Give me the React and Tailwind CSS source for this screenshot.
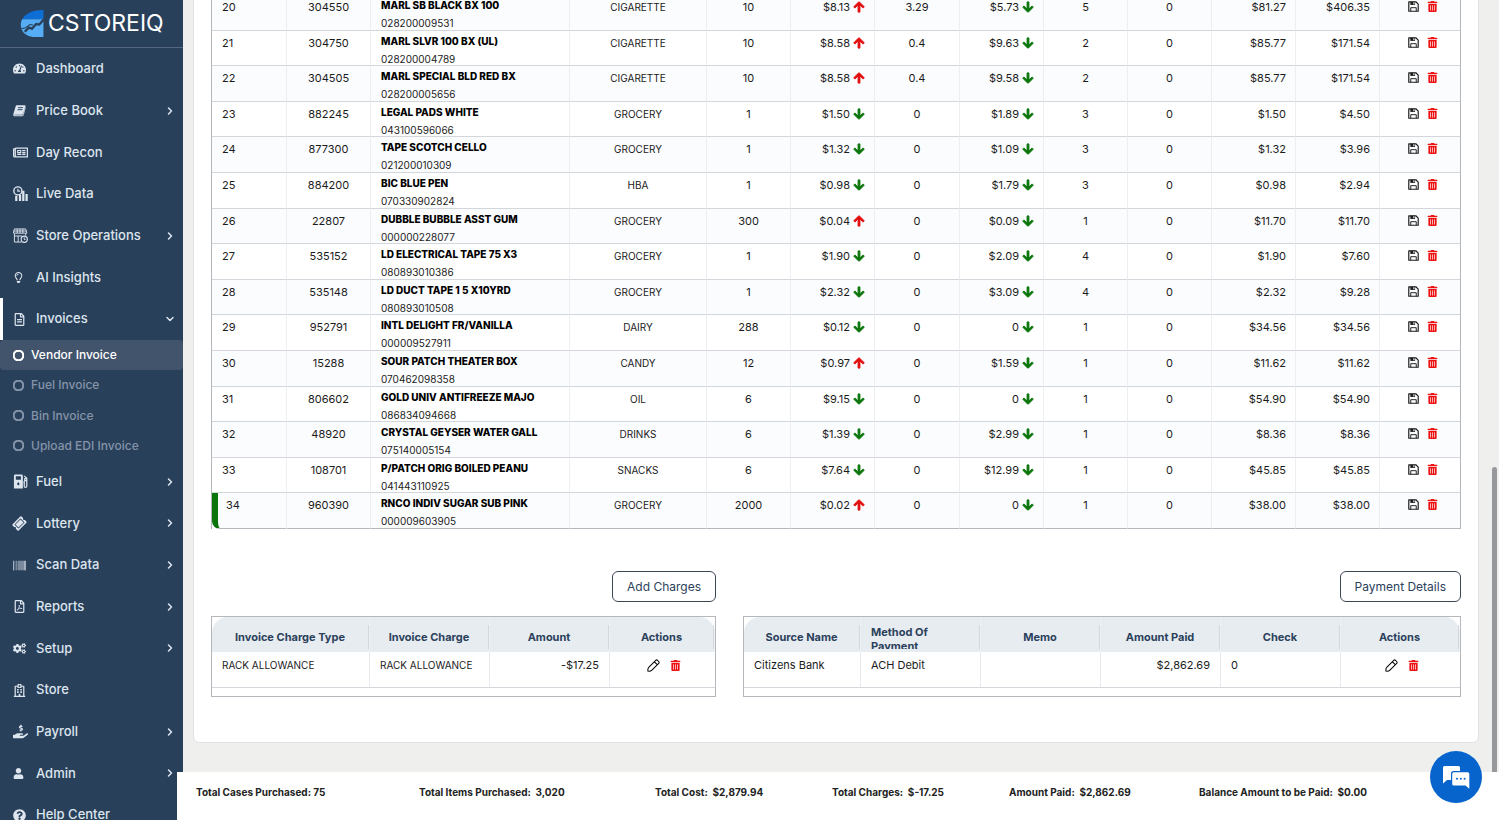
import { ChevronDown, ChevronRight } from 'lucide-react';
import {
  FaArrowDown, FaArrowUp, FaBarcode, FaCogs, FaHandHoldingUsd, FaQuestionCircle, FaRegCircle, FaRegFileAlt,
  FaRegFilePdf, FaRegHospital, FaRegLightbulb, FaRegNewspaper, FaTachometerAlt, FaTicketAlt, FaTrashAlt, FaUser,
} from 'react-icons/fa';

function BookIcon(props) {
  return (
    <svg viewBox="0 0 16 16" fill="currentColor" {...props}>
      <path d="M5 1.500h9.200c.9 0 1.400.7 1.100 1.500l-2.600 8.800c-.3 1-.9 1.300-1.800 1.300H2.200c-.5 0-.5.7.2.7h9.200c.5 0 .8-.2.9-.6L15.300 4l.5.3-2.600 9.300c-.2.8-1 1.400-1.800 1.400H2.200C1 15 0 14 .3 12.800L3.200 3C3.500 2 4 1.500 5 1.500z" />
      <path d="M6.300 4.500h6M5.600 7h6" stroke="#29405b" strokeWidth="1.200" />
    </svg>
  );
}

function LiveDataIcon(props) {
  return (
    <svg viewBox="0 0 16 16" fill="none" stroke="currentColor" {...props}>
      <circle cx="5.200" cy="5.200" r="4.300" strokeWidth="1.500" />
      <path d="M5.200 2.800v2.600h2.400" strokeWidth="1.200" />
      <path d="M3.500 10.500V16M7.500 9.500V16M11 5v11M14.500 8.500V16" strokeWidth="2.400" />
    </svg>
  );
}

function StoreOpsIcon(props) {
  return (
    <svg viewBox="0 0 16 16" fill="none" stroke="currentColor" {...props}>
      <path d="M1.500 1h12l1.300 4.500H.5zM.5 3.200h14M4.500 1v4.500M7.500 1v4.500M10.500 1v4.500M1.500 6v9h7.500M1.500 8.500h8M5.500 8.500V15M13.500 6v2" strokeWidth="1" />
      <circle cx="12" cy="12" r="3.300" strokeWidth="1.200" />
      <path d="M12 10v2.200h1.500" />
    </svg>
  );
}

function PumpIcon(props) {
  return (
    <svg viewBox="0 0 16 16" {...props}>
      <path fill="currentColor" fillRule="evenodd" d="M2.500.5H9A1.500 1.500 0 0 1 10.500 2v13.500H1V2A1.500 1.500 0 0 1 2.500.5zM3 2.500V6h5.500V2.500zM5.700 8.600c-1 1.300-1.200 1.600-1.200 2.200a1.200 1.200 0 0 0 2.400 0c0-.6-.2-.9-1.200-2.200z" />
      <path fill="none" stroke="currentColor" strokeWidth="1.300" d="M11 8.500h1V13c0 1.600 2.700 1.600 2.700 0V4.500L12 2M14.500 5h-2v2h2" />
    </svg>
  );
}

function FloppyIcon(props) {
  return (
    <svg viewBox="0 0 14 14" fill="none" stroke="currentColor" {...props}>
      <path d="M1 1h9l3 3v9H1z" strokeWidth="1.500" strokeLinejoin="round" />
      <path d="M3.500 13V8.500h7V13" strokeWidth="1.200" />
      <path d="M3 1h6v4H3z" fill="currentColor" stroke="none" />
      <path d="M7.500 1.500v2.500" stroke="white" strokeWidth="1.400" />
    </svg>
  );
}

function PencilIcon(props) {
  return (
    <svg viewBox="0 0 14 14" fill="none" stroke="currentColor" strokeWidth="1.100" strokeLinejoin="round" {...props}>
      <path d="M9.400 1.400c.6-.6 1.300-.6 1.900 0l1.300 1.300c.6.6.6 1.300 0 1.900L5.300 11.900c-1 1-3.200 1.300-4.300 1.100-.2-1.100.1-3.300 1.100-4.300zM8 3l3 3" />
    </svg>
  );
}

function ChatIcon(props) {
  return (
    <svg viewBox="0 0 28 24" {...props}>
      <path fill="white" d="M2.500 1h14A1.500 1.500 0 0 1 18 2.500V6h-6.500A2.500 2.500 0 0 0 9 8.500V15H5l-4 3.500v-16A1.500 1.500 0 0 1 2.500 1z" />
      <path fill="white" d="M11.700 7.200h14.100a1.500 1.500 0 0 1 1.500 1.500v15L23.500 20.500H11.700a1.500 1.500 0 0 1-1.500-1.500V8.700a1.500 1.500 0 0 1 1.500-1.500z" />
      <g fill="#0664cc">
        <circle cx="15" cy="13.800" r="1" />
        <circle cx="18.800" cy="13.800" r="1" />
        <circle cx="22.600" cy="13.800" r="1" />
      </g>
    </svg>
  );
}

function LogoMark(props) {
  return (
    <svg viewBox="0 0 22 26" {...props}>
      <path fill="#0d6fd6" d="M22 0v9H1.500C5 3 12 0 22 0z" />
      <path fill="#56adf3" d="M1.500 9H22v17h-8c-6 0-11-2.500-13-7.500C-.3 15 0 12 1.500 9z" />
      <path fill="none" stroke="#29405b" strokeWidth="2.200" d="M4 21l4-4 3 1 4-4.500 3 .5 4.500-5" />
      <path fill="none" stroke="#29405b" strokeWidth="1" d="M1 18l4-1 4-3 3 .5" />
    </svg>
  );
}

const topItems = [
  { label: 'Dashboard', icon: FaTachometerAlt },
  { label: 'Price Book', icon: BookIcon, more: true },
  { label: 'Day Recon', icon: FaRegNewspaper, large: true },
  { label: 'Live Data', icon: LiveDataIcon, large: true },
  { label: 'Store Operations', icon: StoreOpsIcon, more: true, large: true },
  { label: 'AI Insights', icon: FaRegLightbulb, small: true },
  { label: 'Invoices', icon: FaRegFileAlt, open: true },
];

const invoiceItems = ['Vendor Invoice', 'Fuel Invoice', 'Bin Invoice', 'Upload EDI Invoice'];

const bottomItems = [
  { label: 'Fuel', icon: PumpIcon, more: true, large: true },
  { label: 'Lottery', icon: FaTicketAlt, more: true, tilt: true },
  { label: 'Scan Data', icon: FaBarcode, more: true },
  { label: 'Reports', icon: FaRegFilePdf, more: true },
  { label: 'Setup', icon: FaCogs, more: true },
  { label: 'Store', icon: FaRegHospital },
  { label: 'Payroll', icon: FaHandHoldingUsd, more: true, large: true },
  { label: 'Admin', icon: FaUser, more: true, small: true },
  { label: 'Help Center', icon: FaQuestionCircle },
];

// no, item, name, upc, category, units, cost, cost dir, discount, retail, qty, unit total, total
const rows = [
  [20, '304550', 'MARL SB BLACK BX 100', '028200009531', 'CIGARETTE', '10', '$8.13', 'up', '3.29', '$5.73', '5', '$81.27', '$406.35'],
  [21, '304750', 'MARL SLVR 100 BX (UL)', '028200004789', 'CIGARETTE', '10', '$8.58', 'up', '0.4', '$9.63', '2', '$85.77', '$171.54'],
  [22, '304505', 'MARL SPECIAL BLD RED BX', '028200005656', 'CIGARETTE', '10', '$8.58', 'up', '0.4', '$9.58', '2', '$85.77', '$171.54'],
  [23, '882245', 'LEGAL PADS WHITE', '043100596066', 'GROCERY', '1', '$1.50', 'down', '0', '$1.89', '3', '$1.50', '$4.50'],
  [24, '877300', 'TAPE SCOTCH CELLO', '021200010309', 'GROCERY', '1', '$1.32', 'down', '0', '$1.09', '3', '$1.32', '$3.96'],
  [25, '884200', 'BIC BLUE PEN', '070330902824', 'HBA', '1', '$0.98', 'down', '0', '$1.79', '3', '$0.98', '$2.94'],
  [26, '22807', 'DUBBLE BUBBLE ASST GUM', '000000228077', 'GROCERY', '300', '$0.04', 'up', '0', '$0.09', '1', '$11.70', '$11.70'],
  [27, '535152', 'LD ELECTRICAL TAPE 75 X3', '080893010386', 'GROCERY', '1', '$1.90', 'down', '0', '$2.09', '4', '$1.90', '$7.60'],
  [28, '535148', 'LD DUCT TAPE 1 5 X10YRD', '080893010508', 'GROCERY', '1', '$2.32', 'down', '0', '$3.09', '4', '$2.32', '$9.28'],
  [29, '952791', 'INTL DELIGHT FR/VANILLA', '000009527911', 'DAIRY', '288', '$0.12', 'down', '0', '0', '1', '$34.56', '$34.56'],
  [30, '15288', 'SOUR PATCH THEATER BOX', '070462098358', 'CANDY', '12', '$0.97', 'up', '0', '$1.59', '1', '$11.62', '$11.62'],
  [31, '806602', 'GOLD UNIV ANTIFREEZE MAJO', '086834094668', 'OIL', '6', '$9.15', 'down', '0', '0', '1', '$54.90', '$54.90'],
  [32, '48920', 'CRYSTAL GEYSER WATER GALL', '075140005154', 'DRINKS', '6', '$1.39', 'down', '0', '$2.99', '1', '$8.36', '$8.36'],
  [33, '108701', 'P/PATCH ORIG BOILED PEANU', '041443110925', 'SNACKS', '6', '$7.64', 'down', '0', '$12.99', '1', '$45.85', '$45.85'],
  [34, '960390', 'RNCO INDIV SUGAR SUB PINK', '000009603905', 'GROCERY', '2000', '$0.02', 'up', '0', '0', '1', '$38.00', '$38.00'],
];

const totals = [
  'Total Cases Purchased: 75',
  'Total Items Purchased:\u00a0 3,020',
  'Total Cost:\u00a0 $2,879.94',
  'Total Charges:\u00a0 $-17.25',
  'Amount Paid:\u00a0 $2,862.69',
  'Balance Amount to be Paid:\u00a0 $0.00',
];

function NavItem({ item }) {
  const Icon = item.icon;
  let size = 'size-[13px]';
  if (item.large) size = 'size-[15px]';
  if (item.small) size = 'size-[11px]';
  return (
    <a
      href="#"
      className={`flex items-center pr-[7px] pl-[10px] text-[13px] font-medium text-[#dde5ee] border-l-3 ${item.open ? 'border-white' : 'border-transparent'}`}
    >
      <span className="w-[23px] shrink-0">
        <Icon className={`${size} ${item.tilt ? '-rotate-45' : ''}`} />
      </span>
      <span className="flex-1 whitespace-nowrap">{item.label}</span>
      {item.more && <ChevronRight className="size-3" strokeWidth={3} />}
      {item.open && <ChevronDown className="size-3" strokeWidth={3} />}
    </a>
  );
}

function Sidebar() {
  return (
    <aside className="flex w-[183px] shrink-0 flex-col overflow-hidden bg-[#29405b]">
      <div className="flex h-12 shrink-0 items-center gap-1 border-b border-[#54677e] pl-5">
        <LogoMark className="h-[27px] w-6" />
        <span className="text-[23px] leading-none text-white">CSTOREIQ</span>
      </div>
      <nav className="flex flex-col">
        <div className="grid h-[292px] auto-rows-fr">
          {topItems.map((item) => <NavItem key={item.label} item={item} />)}
        </div>
        <div className="grid h-[121px] auto-rows-fr">
          {invoiceItems.map((label, i) => (
            <a
              key={label}
              href="#"
              className={`flex items-center gap-[7px] rounded-sm pl-[13px] text-xs font-medium ${i === 0 ? 'bg-[#42536c] text-white' : 'text-[#8494a8]'}`}
            >
              <FaRegCircle className="size-[11px]" stroke="currentColor" strokeWidth={50} />
              {label}
            </a>
          ))}
        </div>
        <div className="grid h-[375px] auto-rows-fr">
          {bottomItems.map((item) => <NavItem key={item.label} item={item} />)}
        </div>
      </nav>
    </aside>
  );
}

function Trend({ value, dir }) {
  return (
    <span className="flex items-center justify-end gap-[3px]">
      {value}
      {dir === 'up' ? (
        <FaArrowUp className="size-3 text-[#e30d0d]" stroke="currentColor" strokeWidth={40} />
      ) : (
        <FaArrowDown className="size-3 text-[#0b750b]" stroke="currentColor" strokeWidth={40} />
      )}
    </span>
  );
}

function InvoiceTable() {
  const cell = 'border-r border-b border-r-[#eceef1] border-b-[#d3d6da] pt-[3px] align-top group-last:border-b-[#b4b8bc]';
  return (
    <div className="border-x border-[#b4b8bc]">
      <table className="h-[534px] w-full table-fixed border-separate border-spacing-0 text-[11px] leading-[18px] text-[#1b1b1b]">
        <colgroup>
          <col className="w-[75px]" />
          <col className="w-[84px]" />
          <col className="w-[199px]" />
          <col className="w-[137px]" />
          <col className="w-[84px]" />
          <col className="w-[84px]" />
          <col className="w-[85px]" />
          <col className="w-[84px]" />
          <col className="w-[84px]" />
          <col className="w-[84px]" />
          <col className="w-[84px]" />
          <col className="w-[84px]" />
          <col />
        </colgroup>
        <tbody>
          {rows.map(([no, code, name, upc, category, units, cost, dir, discount, retail, qty, unitTotal, total]) => (
            <tr key={no} className="group even:bg-white odd:bg-[#fbfcfe]">
              <td className={`${cell} ${no === 34 ? 'rounded-bl-lg border-l-6 border-l-[#0b750b] pl-2' : 'pl-[10px]'}`}>{no}</td>
              <td className={`${cell} text-center`}>{code}</td>
              <td className={`${cell} pl-[10px]`}>
                <div className="-mt-[3px] h-8 text-[10px] whitespace-nowrap">
                  <div className="pt-[1px] font-extrabold text-black">{name}</div>
                  <div>{upc}</div>
                </div>
              </td>
              <td className={`${cell} text-center text-[10px]`}>{category}</td>
              <td className={`${cell} text-center`}>{units}</td>
              <td className={`${cell} pr-[9px]`}><Trend value={cost} dir={dir} /></td>
              <td className={`${cell} text-center`}>{discount}</td>
              <td className={`${cell} pr-[9px]`}><Trend value={retail} dir="down" /></td>
              <td className={`${cell} text-center`}>{qty}</td>
              <td className={`${cell} text-center`}>0</td>
              <td className={`${cell} pr-[9px] text-right`}>{unitTotal}</td>
              <td className={`${cell} pr-[9px] text-right`}>{total}</td>
              <td className="border-b border-b-[#d3d6da] pt-[3px] align-top group-last:border-b-[#b4b8bc]">
                <div className="flex h-[17px] items-center justify-center gap-2 pl-[6px]">
                  <button type="button" aria-label="Save line"><FloppyIcon className="size-[11px]" /></button>
                  <button type="button" aria-label="Delete line"><FaTrashAlt className="size-[11px] text-[#ee1111]" /></button>
                </div>
              </td>
            </tr>
          ))}
        </tbody>
      </table>
    </div>
  );
}

function SmallTable({ columns, cells, children }) {
  return (
    <div className="h-[81px] border border-[#b4b8bc]">
      <table className="w-full table-fixed border-separate border-spacing-0 text-[11px]">
        {children}
        <thead>
          <tr>
            {columns.map((label) => (
              <th
                key={label}
                className="h-[35px] border-r border-[#eef1f4] bg-[#e7ecf0] pt-2 pb-[3px] first:rounded-tl-2xl last:rounded-tr-2xl"
              >
                <div
                  className={`flex h-6 justify-center overflow-hidden border-r border-[#d2d8dd] px-[10px] leading-[14px] font-bold text-[#2b415c] ${label === 'Method Of Payment' ? 'items-start text-left' : 'items-center whitespace-nowrap'}`}
                >
                  {label}
                </div>
              </th>
            ))}
          </tr>
        </thead>
        <tbody>
          <tr>
            {cells.map((value, i) => (
              <td
                key={columns[i]}
                className={`h-9 border-r border-b border-r-[#e6e9ec] border-b-[#d3d6da] px-[10px] pt-1 align-top leading-[18px] whitespace-nowrap text-[#1b1b1b] ${value.includes('$') ? 'text-right' : ''} ${value === 'RACK ALLOWANCE' ? 'text-[10px]' : ''}`}
              >
                {value}
              </td>
            ))}
            <td className="h-9 border-b border-[#d3d6da] pt-1 align-top">
              <div className="flex h-[18px] items-center justify-center gap-[10px] pl-[2px]">
                <button type="button" aria-label="Edit"><PencilIcon className="size-[13px]" /></button>
                <button type="button" aria-label="Delete"><FaTrashAlt className="size-[11px] text-[#ee1111]" /></button>
              </div>
            </td>
          </tr>
        </tbody>
      </table>
    </div>
  );
}

function OutlineButton({ children }) {
  return (
    <button
      type="button"
      className="h-[31px] self-end rounded-md border border-[#3b4757] bg-white px-[14px] text-xs whitespace-nowrap text-[#2b415c]"
    >
      {children}
    </button>
  );
}

export default function App() {
  return (
    <div className="flex h-screen overflow-hidden bg-[#efefee] font-[Inter,sans-serif]">
      <Sidebar />
      <div className="flex min-w-0 flex-1 flex-col">
        {/* scrolled to the end of the invoice */}
        <main className="relative flex min-h-0 flex-1 flex-col justify-end overflow-hidden pr-5 pb-[29px] pl-[10px]">
          <div className="rounded-b-md border border-[#dfe1e3] bg-white px-[17px] pb-[45px]">
            <InvoiceTable />
            <div className="mt-[42px] grid grid-cols-[505fr_718fr] gap-[27px]">
              <section className="flex flex-col gap-[14px]">
                <OutlineButton>Add Charges</OutlineButton>
                <SmallTable
                  columns={['Invoice Charge Type', 'Invoice Charge', 'Amount', 'Actions']}
                  cells={['RACK ALLOWANCE', 'RACK ALLOWANCE', '-$17.25']}
                >
                  <colgroup>
                    <col className="w-[158px]" />
                    <col className="w-[120px]" />
                    <col className="w-[120px]" />
                    <col />
                  </colgroup>
                </SmallTable>
              </section>
              <section className="flex flex-col gap-[14px]">
                <OutlineButton>Payment Details</OutlineButton>
                <SmallTable
                  columns={['Source Name', 'Method Of Payment', 'Memo', 'Amount Paid', 'Check', 'Actions']}
                  cells={['Citizens Bank', 'ACH Debit', '', '$2,862.69', '0']}
                >
                  <colgroup>
                    <col className="w-[117px]" />
                    <col className="w-[120px]" />
                    <col className="w-[120px]" />
                    <col className="w-[120px]" />
                    <col className="w-[120px]" />
                    <col />
                  </colgroup>
                </SmallTable>
              </section>
            </div>
          </div>
          <div className="absolute right-[2px] bottom-0 h-[305px] w-[5px] rounded-t-full bg-[#97989b]" />
        </main>
        <footer className="relative -ml-[6px] grid h-12 shrink-0 grid-cols-[223fr_236fr_177fr_177fr_190fr_300fr] bg-white pt-[11px] pl-[19px] text-[10px] leading-[18px] font-bold whitespace-nowrap text-[#222]">
          {totals.map((text) => <span key={text}>{text}</span>)}
        </footer>
      </div>
      <button
        type="button"
        aria-label="Open chat"
        className="fixed right-[17px] bottom-[17px] flex size-[52px] items-center justify-center rounded-full bg-[#0664cc]"
      >
        <ChatIcon className="h-6 w-7" />
      </button>
    </div>
  );
}
